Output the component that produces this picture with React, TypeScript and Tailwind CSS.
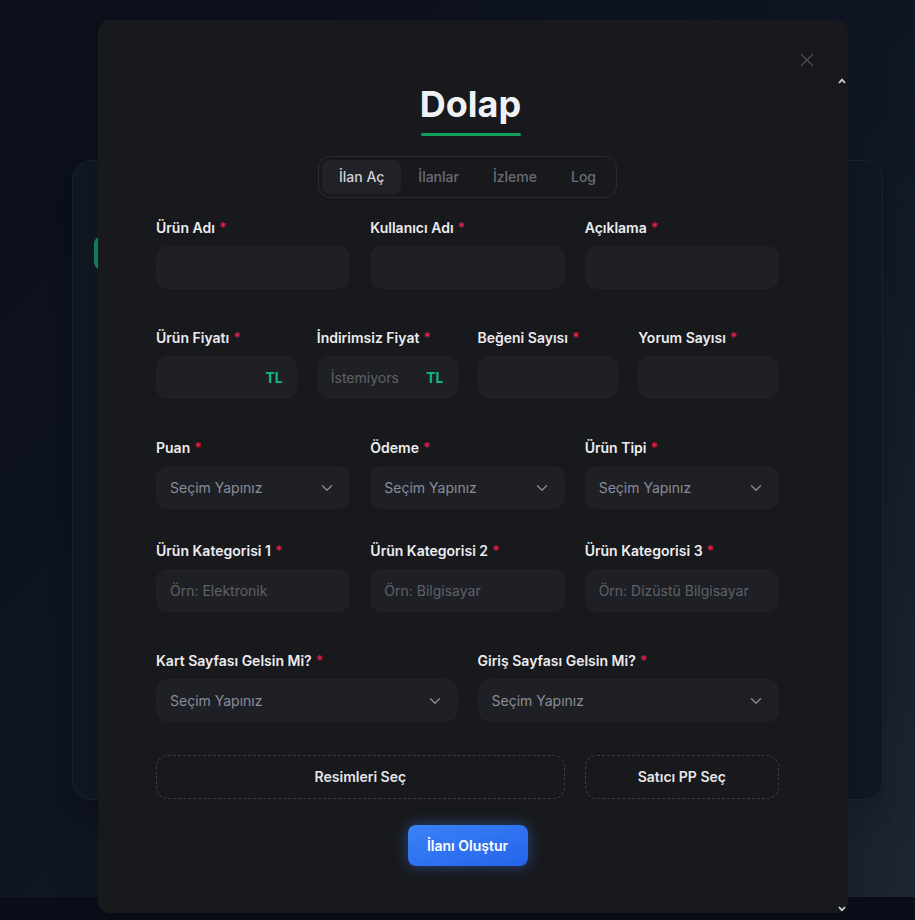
import { ChevronDown, X } from 'lucide-react'
import type { ReactNode } from 'react'

const TABS = ['İlan Aç', 'İlanlar', 'İzleme', 'Log']

function FieldLabel({ children }: { children: ReactNode }) {
  return (
    <label className="mb-2 block text-sm font-semibold leading-5 text-[#ececef]">
      {children}
      <span className="ml-1 text-[#e11d48]">*</span>
    </label>
  )
}

function TextField({ label, placeholder, suffix }: { label: string; placeholder?: string; suffix?: string }) {
  return (
    <div>
      <FieldLabel>{label}</FieldLabel>
      <div className="flex h-[43px] items-center rounded-xl bg-[#1f2025]">
        <input
          placeholder={placeholder}
          className="h-full min-w-0 flex-1 bg-transparent pl-3.5 pr-[3px] text-sm text-[#e4e4e7] outline-none placeholder:text-[#5e6169]"
        />
        {suffix && <span className="pl-6 pr-3.5 text-sm font-bold text-[#10b981]">{suffix}</span>}
      </div>
    </div>
  )
}

function SelectField({ label }: { label: string }) {
  return (
    <div>
      <FieldLabel>{label}</FieldLabel>
      <button
        type="button"
        className="flex h-[43px] w-full items-center justify-between rounded-xl bg-[#1f2025] pl-3.5 pr-3.5 text-sm text-[#8a8c96]"
      >
        <span>Seçim Yapınız</span>
        <ChevronDown size={18} strokeWidth={1.75} className="text-[#8a8d96]" />
      </button>
    </div>
  )
}

function ScrollArrow({ down }: { down?: boolean }) {
  return (
    <svg width="8" height="6" viewBox="0 0 8 6" className={down ? 'rotate-180' : ''}>
      <path d="M1 5 L4 1.6 L7 5" fill="none" stroke="#cfd0d4" strokeWidth="1.8" />
    </svg>
  )
}

export default function App() {
  return (
    <div className="relative min-h-[920px] bg-[#0a0e19] font-['Inter',sans-serif]">
      {/* page behind the dialog */}
      <main className="h-[897px] bg-gradient-to-br from-[#0a0f1a] via-[#0f1522] to-[#1d2432] pl-[72px] pt-[160px]">
        <section className="h-[640px] w-[811px] rounded-[20px] border border-[#1c2330] bg-[#111823] pl-[21px] pt-[75px] shadow-xl">
          <div className="h-[34px] w-[180px] rounded-lg bg-[#0f8a5f]" />
        </section>
      </main>

      {/* dialog */}
      <div
        role="dialog"
        className="absolute left-[98px] top-5 flex h-[893px] w-[750px] overflow-hidden rounded-xl bg-[#18191d] shadow-2xl"
      >
        <button aria-label="Kapat" className="absolute right-[30px] top-[29px] text-[#4a4c55]">
          <X size={22} strokeWidth={1.5} />
        </button>

        <div className="flex-1 pl-[58px] pr-[57px] pt-16">
          <div className="flex flex-col items-center">
            <h1 className="ml-1.5 text-4xl font-bold leading-10 text-[#f1f1f4]">Dolap</h1>
            <div className="ml-1.5 mt-[9px] h-[3px] w-[100px] rounded-full bg-[#12a15a]" />

            <div className="mt-5 flex rounded-xl border border-[#2a2c32] p-[3px]">
              {TABS.map((tab, i) => (
                <button
                  key={tab}
                  className={`h-[34px] rounded-lg px-[17px] text-sm font-medium ${
                    i === 0 ? 'bg-[#212227] text-[#cfd0d5]' : 'text-[#6a6d77]'
                  }`}
                >
                  {tab}
                </button>
              ))}
            </div>
          </div>

          <form className="mt-5">
            <div className="grid grid-cols-3 gap-x-5">
              <TextField label="Ürün Adı" />
              <TextField label="Kullanıcı Adı" />
              <TextField label="Açıklama" />
            </div>

            <div className="mt-[39px] grid grid-cols-4 gap-x-5">
              <TextField label="Ürün Fiyatı" suffix="TL" />
              <TextField label="İndirimsiz Fiyat" placeholder="İstemiyorsanız boş bırakın" suffix="TL" />
              <TextField label="Beğeni Sayısı" />
              <TextField label="Yorum Sayısı" />
            </div>

            <div className="mt-[39px] grid grid-cols-3 gap-x-5">
              <SelectField label="Puan" />
              <SelectField label="Ödeme" />
              <SelectField label="Ürün Tipi" />
            </div>

            <div className="mt-8 grid grid-cols-3 gap-x-5">
              <TextField label="Ürün Kategorisi 1" placeholder="Örn: Elektronik" />
              <TextField label="Ürün Kategorisi 2" placeholder="Örn: Bilgisayar" />
              <TextField label="Ürün Kategorisi 3" placeholder="Örn: Dizüstü Bilgisayar" />
            </div>

            <div className="mt-[39px] grid grid-cols-2 gap-x-5">
              <SelectField label="Kart Sayfası Gelsin Mi?" />
              <SelectField label="Giriş Sayfası Gelsin Mi?" />
            </div>

            <div className="mt-[33px] grid grid-cols-3 gap-x-5">
              <button
                type="button"
                className="col-span-2 h-11 rounded-xl border border-dashed border-[#3a3c43] text-sm font-semibold text-[#e6e6e9]"
              >
                Resimleri Seç
              </button>
              <button
                type="button"
                className="h-11 rounded-xl border border-dashed border-[#3a3c43] text-sm font-semibold text-[#e6e6e9]"
              >
                Satıcı PP Seç
              </button>
            </div>

            <div className="mt-[26px] flex justify-center">
              <button
                type="button"
                className="h-[41px] w-[120px] rounded-lg bg-gradient-to-br from-[#3b82f6] to-[#2563eb] text-sm font-semibold text-white shadow-[0_0_14px_rgba(59,130,246,0.45)]"
              >
                İlanı Oluştur
              </button>
            </div>
          </form>
        </div>

        {/* scroll gutter */}
        <div className="flex w-3 flex-col items-center justify-between pb-[1px] pt-[58px]">
          <ScrollArrow />
          <ScrollArrow down />
        </div>
      </div>
    </div>
  )
}
